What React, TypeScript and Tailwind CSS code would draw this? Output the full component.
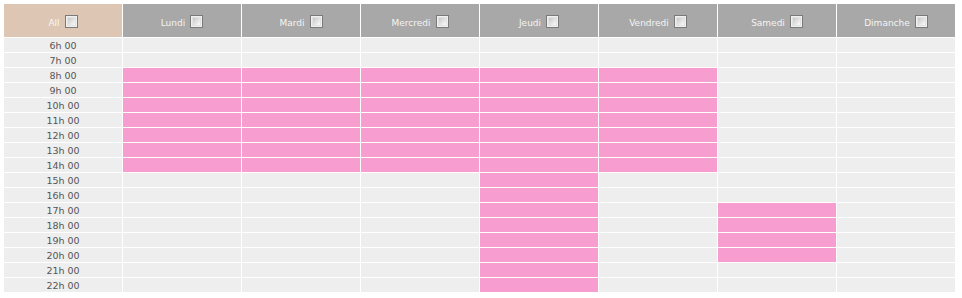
import React from "react";

const days = ["Lundi", "Mardi", "Mercredi", "Jeudi", "Vendredi", "Samedi", "Dimanche"];
const hours = Array.from({ length: 17 }, (_, i) => i + 6);

function isOn(day: number, h: number) {
  if (day <= 4 && h >= 8 && h <= 14) return true;
  if (day === 3 && h >= 8 && h <= 22) return true;
  if (day === 5 && h >= 17 && h <= 20) return true;
  return false;
}

function Box() {
  return (
    <span className="inline-block shrink-0 w-[13px] h-[13px] border border-[#7a7a7a] bg-[#f0f0f0] p-px box-border">
      <span className="block w-full h-full bg-gradient-to-br from-[#c8c8c8] to-[#fafafa] border border-[#e2e2e2] box-border" />
    </span>
  );
}

export default function App() {
  return (
    <div className="w-[962px] h-[298px] bg-white pt-[4px] pl-[4px]" style={{ fontFamily: '"DejaVu Sans", Verdana, sans-serif' }}>
      <div className="grid grid-cols-[repeat(8,118px)] grid-rows-[33px_repeat(17,14px)] gap-px text-[9px]">
        <div className="bg-[#dec6b5] flex items-center justify-center gap-[5px] text-[#f7f7f7] pt-[2px]">
          <span className="mt-[3px] leading-none">All</span>
          <Box />
        </div>
        {days.map((d) => (
          <div key={d} className="bg-[#a8a8a8] flex items-center justify-center gap-[5px] text-[#f4f4f4] pt-[2px]">
            <span className="mt-[3px] leading-none">{d}</span>
            <Box />
          </div>
        ))}
        {hours.map((h) => (
          <React.Fragment key={h}>
            <div className="bg-[#eeeeee] text-[#555555] text-[9.5px] flex items-center justify-center leading-none pt-[2px]">
              {h}h 00
            </div>
            {days.map((d, i) => (
              <div key={d} className={isOn(i, h) ? "bg-[#f79dcf]" : "bg-[#eeeeee]"} />
            ))}
          </React.Fragment>
        ))}
      </div>
    </div>
  );
}
